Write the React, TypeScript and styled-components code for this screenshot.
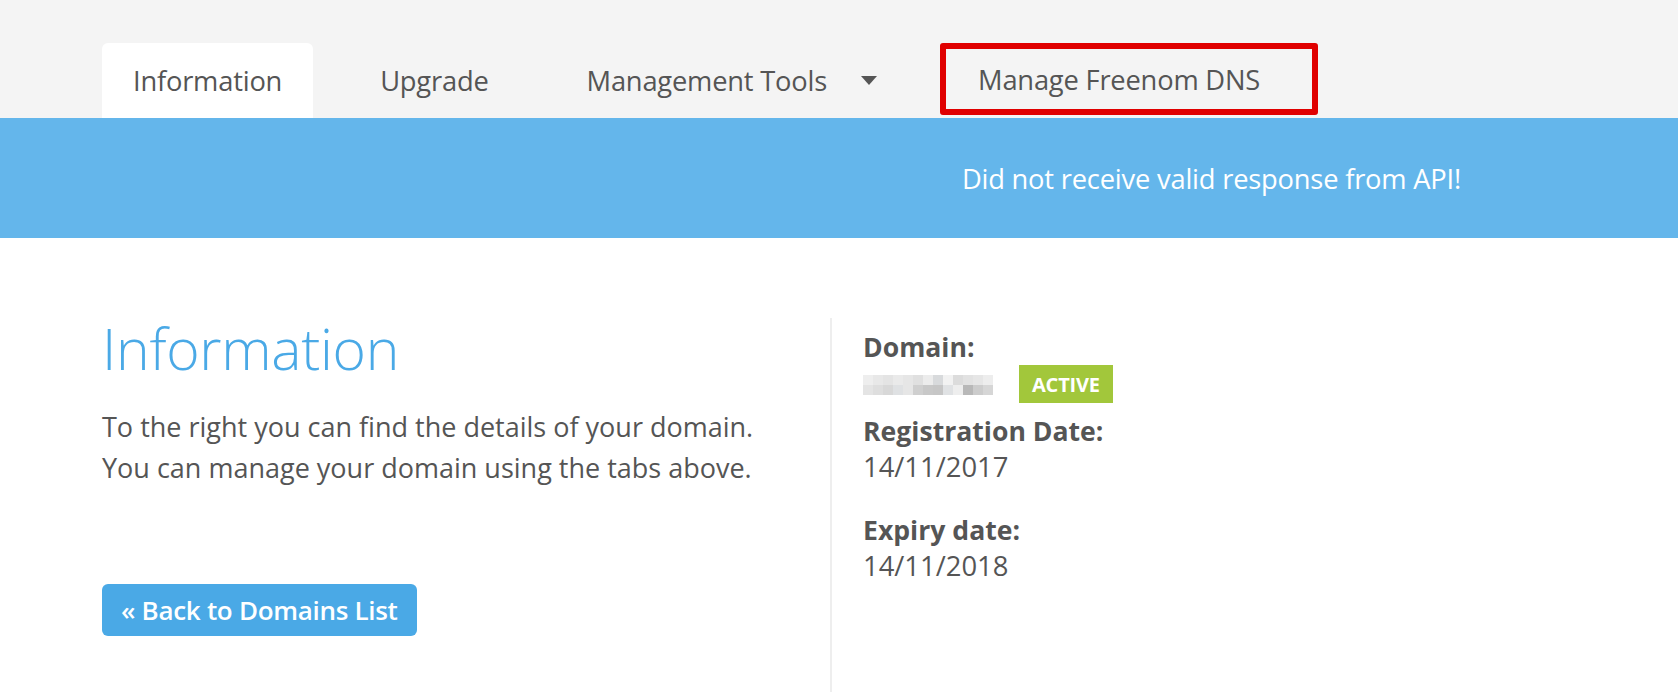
import React from 'react';
import styled, { createGlobalStyle } from 'styled-components';

const GlobalStyle = createGlobalStyle`
  html, body {
    margin: 0;
    padding: 0;
    background: #ffffff;
  }
  body {
    font-family: 'Open Sans', 'Liberation Sans', sans-serif;
    color: #555555;
  }
`;

const Page = styled.div`
  width: 1678px;
  height: 692px;
  overflow: hidden;
  background: #ffffff;
`;

const TabBar = styled.nav`
  background: #f4f4f4;
  height: 118px;
  padding: 43px 0 0 102px;
  box-sizing: border-box;
  display: flex;
  align-items: stretch;
`;

const Tab = styled.div<{ $active?: boolean; $padRight?: number }>`
  display: flex;
  align-items: center;
  padding: 0 ${p => p.$padRight ?? 31}px 0 31px;
  margin-right: 36px;
  font-size: 27.3px;
  font-weight: 400;
  color: #555555;
  background: ${p => (p.$active ? '#ffffff' : 'transparent')};
  border-radius: 6px 6px 0 0;
  letter-spacing: -0.2px;
`;

const Caret = styled.span`
  display: inline-block;
  margin-left: 34px;
  width: 0;
  height: 0;
  border-left: 8px solid transparent;
  border-right: 8px solid transparent;
  border-top: 9px solid #555555;
`;

const Highlighted = styled.div`
  display: flex;
  align-items: center;
  height: 72px;
  box-sizing: border-box;
  padding: 0 52px 0 32px;
  border: 6px solid #e00000;
  border-radius: 3px;
  font-size: 27.3px;
  color: #555555;
  letter-spacing: -0.2px;
`;

const Banner = styled.div`
  background: #64b6eb;
  height: 120px;
  display: flex;
  align-items: center;
  justify-content: flex-end;
  padding-right: 217px;
  color: #ffffff;
  font-size: 27.3px;
  letter-spacing: -0.2px;
`;

const Content = styled.div`
  display: flex;
  padding: 80px 0 0 102px;
`;

const LeftCol = styled.div`
  width: 728px;
  box-sizing: border-box;
  padding-right: 40px;
`;

const Heading = styled.h1`
  margin: -10px 0 18px;
  font-size: 57px;
  font-weight: 300;
  color: #4aa9e6;
  line-height: 80px;
  letter-spacing: -0.3px;
`;

const Lead = styled.p`
  margin: 0;
  font-size: 27px;
  line-height: 41px;
  color: #555555;
`;

const BackButton = styled.button`
  margin-top: 96px;
  height: 52px;
  padding: 0 19px;
  border: none;
  border-radius: 6px;
  background: #4aa9e6;
  color: #ffffff;
  font-family: 'Open Sans', 'Liberation Sans', sans-serif;
  font-size: 26px;
  font-weight: 600;
  letter-spacing: -0.3px;
  cursor: pointer;
`;

const RightCol = styled.div`
  border-left: 2px solid #eeeeee;
  padding: 12px 0 0 31px;
  height: 380px;
`;

const Label = styled.div<{ $gap?: number }>`
  font-size: 26.6px;
  font-weight: 700;
  line-height: 35px;
  color: #555555;
  margin-top: ${p => p.$gap ?? 0}px;
`;

const Value = styled.div`
  font-size: 27.4px;
  line-height: 35px;
  color: #555555;
  display: flex;
  align-items: center;
`;

const DomainRow = styled(Value)`
  height: 49px;
  align-items: flex-start;
`;

const Blurred = styled.div`
  display: grid;
  grid-template-columns: repeat(13, 10px);
  grid-template-rows: repeat(2, 10px);
  width: 130px;
  margin-top: 10px;
`;

const Pixel = styled.span<{ $c: string }>`
  background: ${p => p.$c};
`;

const Badge = styled.span`
  margin-left: 26px;
  display: inline-flex;
  align-items: center;
  height: 38px;
  padding: 0 13px;
  background: #a2c73b;
  color: #ffffff;
  font-size: 20px;
  font-weight: 700;
  letter-spacing: -0.2px;
`;

const pixels = [
  '#eeeeee', '#e8e8e8', '#e4e4e4', '#eaeaea', '#e6e6e6', '#e0e0e0', '#ececec', '#d8dadc', '#f2f2f2', '#dcdcdc', '#e2e2e2', '#e6e6e6', '#ededed',
  '#e4e4e4', '#dedede', '#d8d8d8', '#dfe1e3', '#e6e6e6', '#cfcfcf', '#c8c8c8', '#c6c6c6', '#e0e2e4', '#eeeeee', '#b8b8b8', '#cccccc', '#d6d6d6',
];

const App: React.FC = () => {
  return (
    <Page>
      <GlobalStyle />
      <TabBar>
        <Tab $active>Information</Tab>
        <Tab>Upgrade</Tab>
        <Tab $padRight={27}>
          Management Tools
          <Caret />
        </Tab>
        <Highlighted>Manage Freenom DNS</Highlighted>
      </TabBar>
      <Banner>Did not receive valid response from API!</Banner>
      <Content>
        <LeftCol>
          <Heading>Information</Heading>
          <Lead>
            To the right you can find the details of your domain.
            <br />
            You can manage your domain using the tabs above.
          </Lead>
          <BackButton>« Back to Domains List</BackButton>
        </LeftCol>
        <RightCol>
          <Label>Domain:</Label>
          <DomainRow>
            <Blurred>
              {pixels.map((c, i) => (
                <Pixel key={i} $c={c} />
              ))}
            </Blurred>
            <Badge>ACTIVE</Badge>
          </DomainRow>
          <Label>Registration Date:</Label>
          <Value>14/11/2017</Value>
          <Label $gap={29}>Expiry date:</Label>
          <Value>14/11/2018</Value>
        </RightCol>
      </Content>
    </Page>
  );
};

export default App;
